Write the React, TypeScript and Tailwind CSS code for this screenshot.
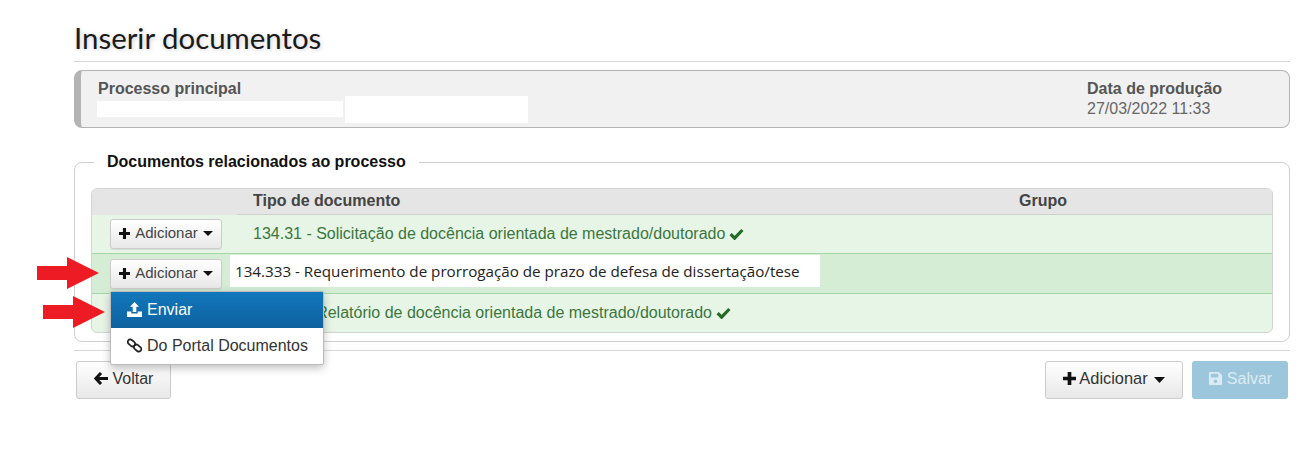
import { FaSave } from "react-icons/fa";

const sans = "font-['Liberation_Sans',Arial,sans-serif]";

function Caret({ big }: { big?: boolean }) {
  return (
    <svg width={big ? 11 : 10} height={big ? 6 : 5} viewBox="0 0 10 5" preserveAspectRatio="none" className={big ? "ml-[6px] mt-[2px] inline-block" : "ml-[5px] inline-block"} aria-hidden>
      <path d="M0 0h10L5 5z" fill="#111" />
    </svg>
  );
}

function Plus({ size, className }: { size: number; className?: string }) {
  return (
    <svg width={size} height={size} viewBox="0 0 12 12" className={className} aria-hidden>
      <path d="M4.3 0h3.4v4.3H12v3.4H7.7V12H4.3V7.7H0V4.3h4.3z" fill="#111" />
    </svg>
  );
}

function Check({ className }: { className?: string }) {
  return (
    <svg width="15" height="12" viewBox="0 0 15 12" className={className} aria-hidden>
      <path d="M1.6 6.2L5.6 10.2 13.4 2" fill="none" stroke="#256b28" strokeWidth="3.2" />
    </svg>
  );
}

function BackArrow() {
  return (
    <svg width="14" height="13" viewBox="0 0 14 13" className="mr-[5px]" aria-hidden>
      <path d="M7 1L1.8 6.5 7 12M2 6.5h12" fill="none" stroke="#111" strokeWidth="3" />
    </svg>
  );
}

function UploadIcon() {
  return (
    <svg width="15" height="15" viewBox="0 0 15 15" className="mr-[5px]" aria-hidden>
      <path d="M7.5 0L12 4.8H9.3V10H5.7V4.8H3z" fill="#fff" />
      <path d="M0 9.5h4.3v2h6.4v-2H15V15H0z" fill="#fff" />
    </svg>
  );
}

function LinkIcon() {
  return (
    <svg width="15" height="15" viewBox="0 0 15 15" className="mr-[5px]" aria-hidden>
      <g fill="none" stroke="#222" strokeWidth="1.7">
        <rect x="0.4" y="2.4" width="8" height="5" rx="2.5" transform="rotate(40 4.4 4.9)" />
        <rect x="6.6" y="7.6" width="8" height="5" rx="2.5" transform="rotate(40 10.6 10.1)" />
      </g>
    </svg>
  );
}

function AddButton() {
  return (
    <button className="flex h-[30px] w-[112px] items-center justify-center rounded-[3px] border border-[#ccc] bg-gradient-to-b from-white to-[#e8e8e8] pb-[1px] text-[15px] text-[#444] shadow-[0_1px_1px_rgba(0,0,0,0.08)]">
      <Plus size={11} className="mr-[5px]" />
      Adicionar
      <Caret />
    </button>
  );
}

function Arrow({ className }: { className: string }) {
  return (
    <svg width="62" height="32" viewBox="0 0 62 32" className={className} aria-hidden>
      <path d="M0 9h30V0l32 16-32 16v-9H0z" fill="#ed1c24" />
    </svg>
  );
}

export default function App() {
  return (
    <div className={`relative h-[453px] w-[1308px] overflow-hidden bg-white ${sans} text-[16px] text-[#333]`}>
      <div className="ml-[74px] w-[1216px]">
        <h1 className="h-[62px] border-b border-[#d8d8d8] pt-[20px] font-['Lato',sans-serif] text-[29.4px] font-normal leading-[36px] text-[#1a1a1a] [text-shadow:1px_1px_4px_rgba(0,0,0,0.2)]">
          Inserir documentos
        </h1>

        <div className="mt-[8px] flex h-[58px] justify-between rounded-[8px] border border-l-[7px] border-[#b4b4b4] bg-[#f1f1f1] pl-[17px] pt-[8px] leading-[20px]">
          <div className="relative">
            <div className="font-bold text-[#555]">Processo principal</div>
            <div className="absolute left-[-1px] top-[22px] h-[16px] w-[246px] bg-white" />
            <div className="absolute left-[247px] top-[17px] h-[27px] w-[183px] bg-white" />
          </div>
          <div className="w-[202px]">
            <div className="font-bold text-[#555]">Data de produção</div>
            <div className="text-[#666]">27/03/2022 11:33</div>
          </div>
        </div>

        <div className="relative mt-[34px] h-[180px] rounded-[8px] border border-[#d0d0d0] px-[16px] pt-[25px]">
          <div className="absolute left-[19px] top-[-10px] bg-white px-[13px] font-bold leading-[18px] text-[#111]">
            Documentos relacionados ao processo
          </div>
          <div className="overflow-hidden rounded-[6px] border border-[#d4d4d4] bg-[#e7f5e7]">
            <div className="flex h-[26px] font-bold text-[#444]">
              <div className="w-[145px] bg-[#e5e5e5]" />
              <div className="flex flex-1 items-center border-b border-[#cfcfcf] bg-[#e5e5e5] pb-[1px] pl-[16px]">
                <div className="w-[766px]">Tipo de documento</div>
                <div>Grupo</div>
              </div>
            </div>
            <div className="flex h-[39px] items-center border-b border-[#a5d6a5] pl-[18px]">
              <AddButton />
              <div className="ml-[31px] flex items-center text-[#3c763d]">
                134.31 - Solicitação de docência orientada de mestrado/doutorado
                <Check className="ml-[4px]" />
              </div>
            </div>
            <div className="flex h-[40px] items-center border-b border-[#a5d6a5] bg-[#d5ecd5] pl-[18px]">
              <AddButton />
              <div className="mb-[5px] ml-[8px] flex h-[32px] w-[590px] items-center bg-white pl-[5px] font-['Open_Sans',sans-serif] text-[15.2px] text-[#222]">
                134.333 - Requerimento de prorrogação de prazo de defesa de dissertação/tese
              </div>
            </div>
            <div className="flex h-[38px] items-center pl-[161px] text-[#3c763d]">
              134.32 - Relatório de docência orientada de mestrado/doutorado
              <Check className="ml-[4px]" />
            </div>
          </div>
        </div>

        <div className="mt-[8px] flex h-[49px] items-end justify-between border-t border-[#d8d8d8]">
          <button className="ml-[2px] flex h-[38px] w-[95px] items-center justify-center rounded-[3px] border border-[#ccc] bg-gradient-to-b from-white to-[#e8e8e8] pb-[3px] text-[16px] text-[#333]">
            <BackArrow />
            Voltar
          </button>
          <div className="mr-[2px] flex gap-[9px]">
            <button className="flex h-[38px] w-[138px] items-center justify-center rounded-[3px] border border-[#ccc] bg-gradient-to-b from-white to-[#e8e8e8] pb-[3px] text-[16.4px] text-[#333]">
              <Plus size={13} className="mr-[3px]" />
              Adicionar
              <Caret big />
            </button>
            <button className="flex h-[38px] w-[96px] items-center justify-center rounded-[3px] bg-[#9cc6db] pb-[3px] text-[16px] text-[#dcebf3]">
              <FaSave className="mr-[4px] text-[15px]" />
              Salvar
            </button>
          </div>
        </div>
      </div>

      <div className="absolute left-[110px] top-[291px] w-[214px] rounded-[2px] border border-[#bbb] bg-white shadow-[0_3px_8px_rgba(0,0,0,0.25)]">
        <div className="flex h-[36px] items-center bg-gradient-to-b from-[#1177bb] to-[#0f62a0] pb-[1px] pl-[16px] text-white">
          <UploadIcon />
          Enviar
        </div>
        <div className="flex h-[36px] items-center pb-[1px] pl-[16px] text-[#333]">
          <LinkIcon />
          Do Portal Documentos
        </div>
      </div>

      <Arrow className="absolute left-[37px] top-[257px]" />
      <Arrow className="absolute left-[43px] top-[296px]" />
    </div>
  );
}
